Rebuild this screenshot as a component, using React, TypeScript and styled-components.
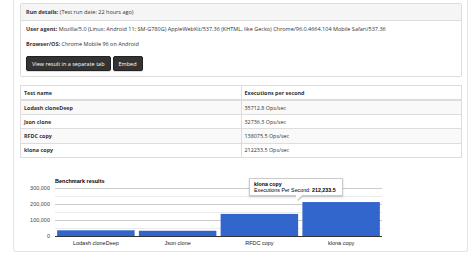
import * as React from "react";
import styled, { createGlobalStyle } from "styled-components";

const GlobalStyle = createGlobalStyle`
	body {
		margin: 0;
		background: #fff;
		color: #333;
		font-family: "Open Sans", "Liberation Sans", sans-serif;
	}
`;

interface Result {
	name: string;
	ops: number;
}

const results: Result[] = [
	{ name: "Lodash cloneDeep", ops: 35712.8 },
	{ name: "Json clone", ops: 32736.3 },
	{ name: "RFDC copy", ops: 138075.5 },
	{ name: "klona copy", ops: 212233.5 },
];

const Page = styled.div`
	padding: 0 6px 0 13px;
	width: 455px;
`;

const Card = styled.div`
	border: 1px solid #e3e3e3;
	border-top: 0;
	border-radius: 0 0 3px 3px;
	padding: 3px 5px 0 6px;
	box-shadow: 0 2px 0 -1px #f0f0f0, 0 3px 0 -1px #e8e8e8;
`;

const Panel = styled.div`
	border: 1px solid #ddd;
	border-radius: 2px;
`;

const PanelHeading = styled.div`
	height: 16px;
	line-height: 16px;
	padding: 0 5px;
	background: #f5f5f5;
	border-bottom: 1px solid #ddd;
	font-size: 5.5px;
`;

const PanelBody = styled.div`
	padding: 3px 5px 5px;
	font-size: 5.5px;
`;

const Line = styled.div`
	line-height: 10px;
	& + & {
		margin-top: 5px;
	}
`;

const ButtonRow = styled.div`
	display: flex;
	gap: 2px;
	margin-top: 7px;
`;

const Button = styled.button`
	height: 15px;
	padding: 0 5px;
	background: #333;
	border: 1px solid #222;
	border-radius: 2px;
	color: #fff;
	font-family: "Open Sans", "Liberation Sans", sans-serif;
	font-size: 5.5px;
	box-shadow: 0 1px 1px rgba(0, 0, 0, 0.15);
`;

const Table = styled.table`
	width: 100%;
	margin-top: 8px;
	border-collapse: collapse;
	border: 1px solid #ddd;
	font-size: 5.4px;
`;

const Row = styled.tr<{ $striped?: boolean }>`
	background: ${(p) => (p.$striped ? "#f9f9f9" : "#fff")};
`;

const HeadCell = styled.th`
	height: 13px;
	padding: 0 3px;
	text-align: left;
	font-weight: 700;
	border: 1px solid #ddd;
	border-bottom-width: 2px;
	width: 50%;
`;

const Cell = styled.td<{ $bold?: boolean }>`
	height: 13.2px;
	padding: 0 3px;
	border: 1px solid #ddd;
	font-weight: ${(p) => (p.$bold ? 700 : 400)};
`;

const ChartBox = styled.div`
	position: relative;
	height: 86px;
	margin-top: 7px;
	font-family: "Liberation Sans", Arial, sans-serif;
`;

const Tooltip = styled.div`
	position: absolute;
	left: 229px;
	top: 13px;
	width: 84px;
	padding: 2px 4px;
	background: #fff;
	border: 1px solid #ccc;
	box-shadow: 0 1px 2px rgba(0, 0, 0, 0.2);
	font-size: 5.3px;
	line-height: 6px;
	color: #000;

	::after {
		content: "";
		position: absolute;
		left: 46px;
		bottom: -5px;
		border-left: 1px solid transparent;
		border-right: 5px solid transparent;
		border-top: 5px solid #fff;
		filter: drop-shadow(1px 1px 0 #ccc);
	}
`;

const plotLeft = 35;
const plotRight = 362;
const baseY = 71;
const maxVal = 300000;
const plotH = 48;

const Chart = () => {
	const step = (plotRight - plotLeft) / results.length;
	const barW = 77.5;
	return (
		<ChartBox>
			<svg width="442" height="86" viewBox="0 0 442 86">
				<text x="35" y="18" fontSize="5.5" fontWeight="700" fill="#000">
					Benchmark results
				</text>
				{[0, 1, 2, 3, 4, 5].map((i) => {
					const y = baseY - (i + 1) * 8;
					return (
						<line
							key={i}
							x1={plotLeft}
							x2={plotRight}
							y1={y + 0.5}
							y2={y + 0.5}
							stroke={i % 2 === 1 ? "#ccc" : "#ebebeb"}
							strokeWidth="1"
						/>
					);
				})}
				{["0", "100,000", "200,000", "300,000"].map((label, i) => (
					<text
						key={label}
						x="30"
						y={baseY - i * 16 + 2}
						fontSize="5.5"
						textAnchor="end"
						fill="#444"
					>
						{label}
					</text>
				))}
				{results.map((r, i) => {
					const h = (r.ops / maxVal) * plotH;
					const x = plotLeft + i * step + (step - barW) / 2;
					return (
						<g key={r.name}>
							<rect x={x} y={baseY - h} width={barW} height={h} fill="#3366cc" />
							<text
								x={x + barW / 2}
								y="80"
								fontSize="5.5"
								textAnchor="middle"
								fill="#222"
							>
								{r.name}
							</text>
						</g>
					);
				})}
				<line x1={plotLeft} x2={plotRight} y1={baseY + 0.5} y2={baseY + 0.5} stroke="#333" />
			</svg>
			<Tooltip>
				<b>klona copy</b>
				<br />
				Executions Per Second: <b>212,233.5</b>
			</Tooltip>
		</ChartBox>
	);
};

const App = () => (
	<Page>
		<GlobalStyle />
		<Card>
			<Panel>
				<PanelHeading>
					<b>Run details:</b> (Test run date: 22 hours ago)
				</PanelHeading>
				<PanelBody>
					<Line>
						<b>User agent:</b> Mozilla/5.0 (Linux; Android 11; SM-G780G) AppleWebKit/537.36 (KHTML, like
						Gecko) Chrome/96.0.4664.104 Mobile Safari/537.36
					</Line>
					<Line>
						<b>Browser/OS:</b> Chrome Mobile 96 on Android
					</Line>
					<ButtonRow>
						<Button>View result in a separate tab</Button>
						<Button>Embed</Button>
					</ButtonRow>
				</PanelBody>
			</Panel>
			<Table>
				<thead>
					<tr>
						<HeadCell>Test name</HeadCell>
						<HeadCell>Executions per second</HeadCell>
					</tr>
				</thead>
				<tbody>
					{results.map((r, i) => (
						<Row key={r.name} $striped={i % 2 === 0}>
							<Cell $bold>{r.name}</Cell>
							<Cell>{r.ops} Ops/sec</Cell>
						</Row>
					))}
				</tbody>
			</Table>
			<Chart />
		</Card>
	</Page>
);

export default App;
